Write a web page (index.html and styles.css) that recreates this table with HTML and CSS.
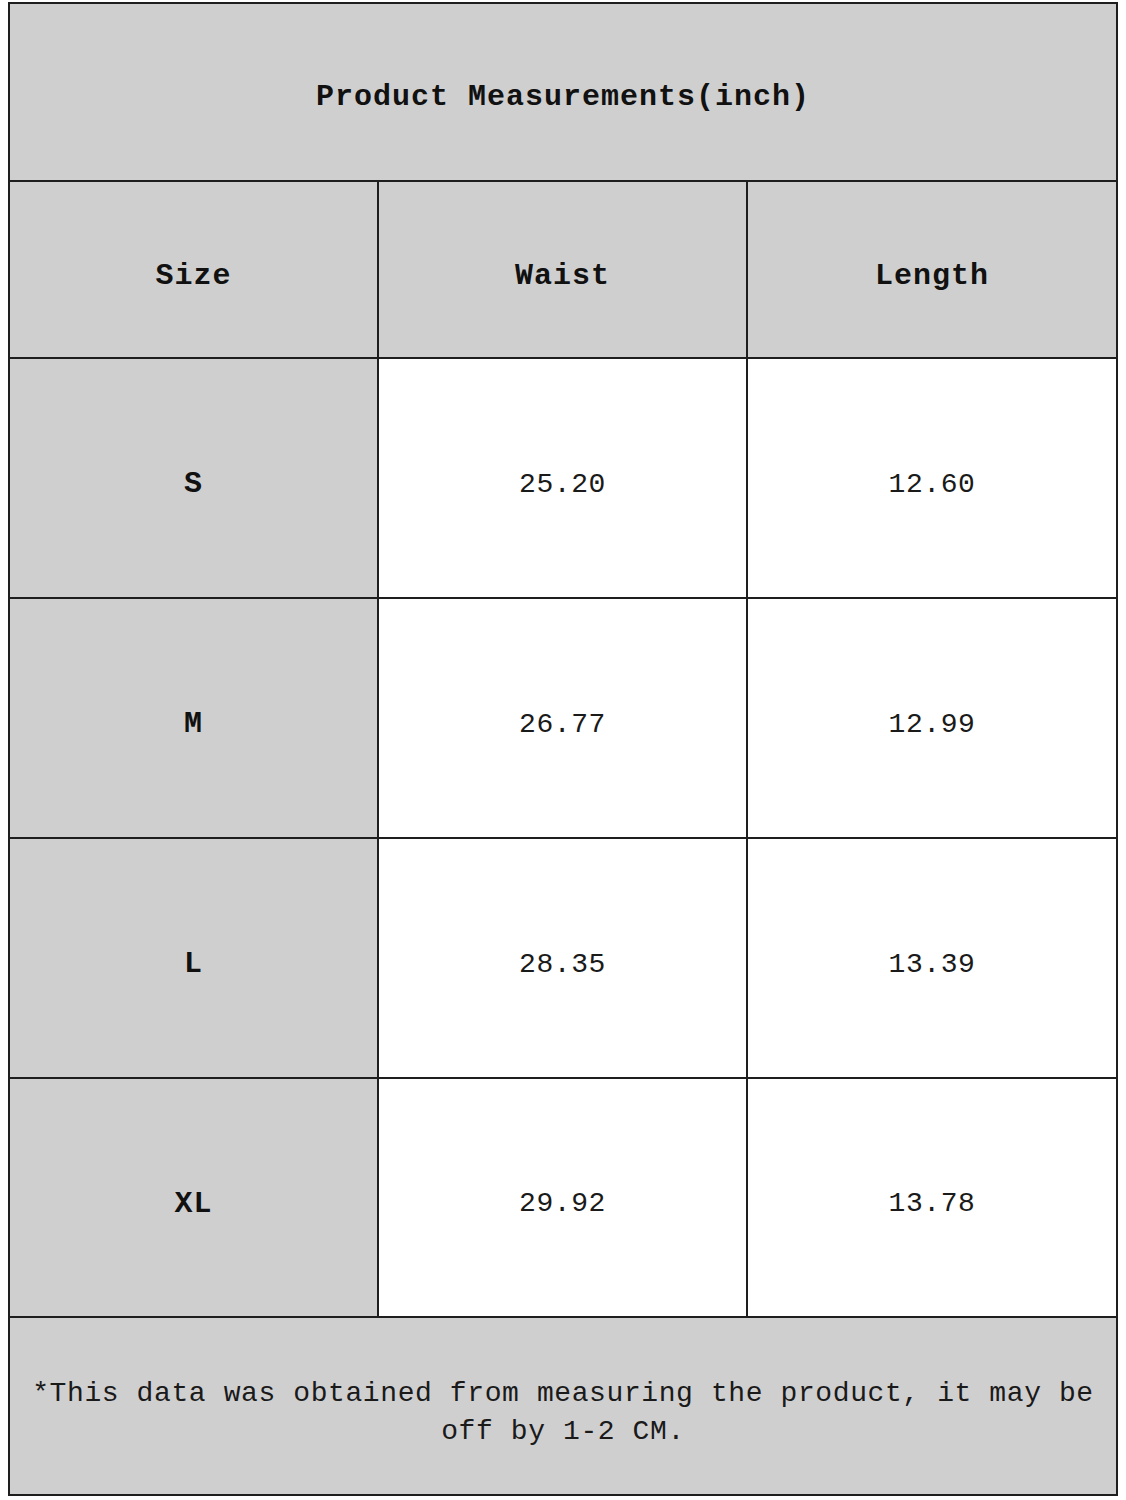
FILE: index.html
```html
<!DOCTYPE html>
<html>
<head>
<meta charset="utf-8">
<link rel="stylesheet" href="styles.css">
</head>
<body>
<div class="sheet">
  <div class="cell head title">Product Measurements(inch)</div>
  <div class="cell head">Size</div>
  <div class="cell head">Waist</div>
  <div class="cell head">Length</div>
  <div class="cell head">S</div>
  <div class="cell data">25.20</div>
  <div class="cell data">12.60</div>
  <div class="cell head">M</div>
  <div class="cell data">26.77</div>
  <div class="cell data">12.99</div>
  <div class="cell head">L</div>
  <div class="cell data">28.35</div>
  <div class="cell data">13.39</div>
  <div class="cell head">XL</div>
  <div class="cell data">29.92</div>
  <div class="cell data">13.78</div>
  <div class="cell note">*This data was obtained from measuring the product, it may be off by 1-2 CM.</div>
</div>
</body>
</html>
```
FILE: styles.css
```css
html, body {
  margin: 0;
  padding: 0;
  background: #ffffff;
}
body {
  padding: 2px 0 0 8px;
}
.sheet {
  display: grid;
  width: 1110px;
  box-sizing: border-box;
  padding: 2px;
  gap: 2px;
  background: #1e1e1e;
  grid-template-columns: 367px 367px 368px;
  grid-template-rows: 176px 175px 238px 238px 238px 237px 176px;
  font-family: "Liberation Mono", "Courier New", monospace;
  color: #111;
}
.cell {
  display: flex;
  align-items: center;
  justify-content: center;
  text-align: center;
  box-sizing: border-box;
  padding-top: 12px;
}
.head {
  background: #d0cfd0;
  font-weight: bold;
  font-size: 30px;
  letter-spacing: 1px;
}
.title {
  grid-column: 1 / 4;
  padding-top: 10px;
}
.data {
  background: #ffffff;
  font-size: 28px;
  letter-spacing: 0.6px;
  color: #1a1a1a;
}
.note {
  grid-column: 1 / 4;
  background: #d0cfd0;
  font-size: 28px;
  letter-spacing: 0.6px;
  line-height: 38px;
  padding: 14px 20px 0;
  color: #1a1a1a;
}
```
